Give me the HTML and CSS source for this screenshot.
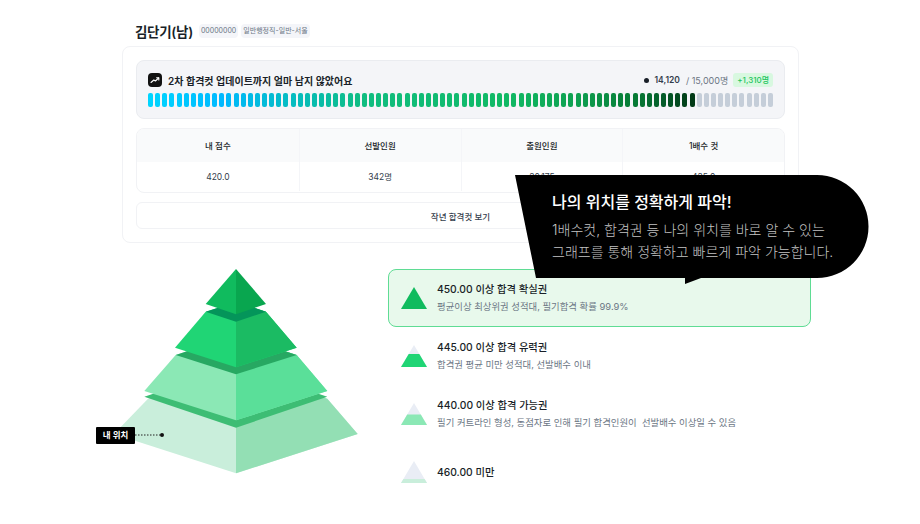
FILE: index.html
```html
<!DOCTYPE html>
<html lang="ko">
<head>
    <meta charset="UTF-8">
    <meta name="viewport" content="width=device-width, initial-scale=1.0">
    <title>합격 예측</title>
    <link rel="stylesheet" href="styles.css">
</head>
<body>
    <div class="page">
        <!-- Applicant header -->
        <div class="profile">
            <h1>김단기(남)</h1>
            <span class="tag">00000000</span>
            <span class="tag">일반행정직-일반-서울</span>
        </div>

        <div class="card">
            <!-- Cut-off progress -->
            <div class="progress-panel">
                <div class="progress-head">
                    <div class="progress-title">
                        <span class="trend-icon">
                            <svg width="10" height="10" viewBox="0 0 10 10" fill="none" stroke="#fff" stroke-width="1.1" stroke-linecap="round" stroke-linejoin="round">
                                <path d="M1 7.5 L3.8 5 L5.4 6 L8.6 3"/>
                                <path d="M6.6 2.8 H8.8 V5"/>
                            </svg>
                        </span>
                        <span>2차 합격컷 업데이트까지 얼마 남지 않았어요</span>
                    </div>
                    <div class="progress-stats">
                        <span class="dot"></span>
                        <span class="count">14,120</span>
                        <span class="total">/ 15,000명</span>
                        <span class="badge">+1,310명</span>
                    </div>
                </div>
                <div class="segments" id="segments"></div>
            </div>

            <!-- Score table -->
            <div class="score-table">
                <div class="cell head">내 점수</div>
                <div class="cell head">선발인원</div>
                <div class="cell head">출원인원</div>
                <div class="cell head">1배수 컷</div>
                <div class="cell">420.0</div>
                <div class="cell">342명</div>
                <div class="cell">30,175</div>
                <div class="cell">435.0</div>
            </div>

            <button class="last-year">작년 합격컷 보기</button>
        </div>

        <!-- Speech bubble -->
        <div class="bubble">
            <svg class="bubble-shape" width="354" height="110" viewBox="0 0 354 110">
                <path d="M0 0 H302 A51.500 51.500 0 0 1 302 103 H186 L170 109 V103 H21 Z" fill="#000"/>
            </svg>
            <h2>나의 위치를 정확하게 파악!</h2>
            <p>1배수컷, 합격권 등 나의 위치를 바로 알 수 있는<br>그래프를 통해 정확하고 빠르게 파악 가능합니다.</p>
        </div>

        <div class="result">
            <!-- Pyramid diagram -->
            <div class="pyramid">
                <svg width="270" height="220" viewBox="96 262 270 220">
                    <polygon points="148,398.700 236,368 327.300,398.700 357.700,434 236,473.300 114,434" fill="#c9eedb"/>
                    <polygon points="236,368 327.300,398.700 357.700,434 236,473.300" fill="#93dfb4"/>
                    <polygon points="144.300,396.700 236,366 327.300,396.700 236,427.700" fill="#3dbd74"/>
                    <polygon points="175.700,355 236,335 296.700,355 327.300,391 236,420.300 144.300,391" fill="#8be8b5"/>
                    <polygon points="236,335 296.700,355 327.300,391 236,420.300" fill="#5adf99"/>
                    <polygon points="175.700,355 236,335 296.700,355 236,374.300" fill="#27a862"/>
                    <polygon points="205.700,311.700 236,302 266,311.700 296.700,347.700 236,367.300 175,347.700" fill="#20d575"/>
                    <polygon points="236,302 266,311.700 296.700,347.700 236,367.300" fill="#1bbb63"/>
                    <polygon points="205.700,311.700 236,302 266,311.700 236,321.700" fill="#04955a"/>
                    <polygon points="236,269 266,304 236,314.300" fill="#09a64f"/>
                    <polygon points="236,269 205.700,304 236,314.300" fill="#10bb5e"/>
                    <line x1="135" y1="435" x2="161" y2="435" stroke="#222" stroke-width="1" stroke-dasharray="1.500 1.500"/>
                    <circle cx="162" cy="435" r="2" fill="#111"/>
                </svg>
                <span class="my-place">내 위치</span>
            </div>

            <!-- Score bands -->
            <div class="bands">
                <div class="band active">
                    <svg width="26" height="22" viewBox="0 0 26 22">
                        <polygon points="13,0 26,22 0,22" fill="#10bb5e"/>
                    </svg>
                    <div>
                        <h3>450.00 이상 합격 확실권</h3>
                        <p>평균이상 최상위권 성적대, 필기합격 확률 99.9%</p>
                    </div>
                </div>
                <div class="band">
                    <svg width="26" height="22" viewBox="0 0 26 22">
                        <polygon points="13,0 26,22 0,22" fill="#e9edf5"/>
                        <polygon points="7.700,9 18.300,9 26,22 0,22" fill="#20d575"/>
                    </svg>
                    <div>
                        <h3>445.00 이상 합격 유력권</h3>
                        <p>합격권 평균 미만 성적대, 선발배수 이내</p>
                    </div>
                </div>
                <div class="band">
                    <svg width="26" height="22" viewBox="0 0 26 22">
                        <polygon points="13,0 26,22 0,22" fill="#e9edf5"/>
                        <polygon points="6.200,11.500 19.800,11.500 26,22 0,22" fill="#8be8b5"/>
                    </svg>
                    <div>
                        <h3>440.00 이상 합격 가능권</h3>
                        <p>필기 커트라인 형성, 동점자로 인해 필기 합격인원이 &nbsp;선발배수 이상일 수 있음</p>
                    </div>
                </div>
                <div class="band">
                    <svg width="26" height="22" viewBox="0 0 26 22">
                        <polygon points="13,0 26,22 0,22" fill="#e9edf5"/>
                        <polygon points="2.400,18 23.600,18 26,22 0,22" fill="#c9eedb"/>
                    </svg>
                    <div>
                        <h3>460.00 미만</h3>
                    </div>
                </div>
            </div>
        </div>
    </div>

    <script src="script.js"></script>
</body>
</html>
```

FILE: styles.css
```css
* {
    margin: 0;
    padding: 0;
    box-sizing: border-box;
}

body {
    font-family: Inter, "Noto Sans CJK KR", sans-serif;
    background-color: #fff;
    color: #191f28;
}

.page {
    position: relative;
    width: 920px;
    height: 524px;
    overflow: hidden;
    padding-top: 22px;
}

/* Header */
.profile {
    display: flex;
    align-items: center;
    height: 18px;
    margin-left: 135px;
    gap: 3px;
}

.profile h1 {
    font-size: 13.500px;
    font-weight: 600;
    margin-right: 3px;
    letter-spacing: -0.3px;
}

.tag {
    font-size: 7px;
    line-height: 14px;
    padding: 0 2px;
    color: #6b7684;
    background-color: #f4f5f9;
    border-radius: 4px;
}

/* Card */
.card {
    width: 677px;
    height: 197px;
    margin: 6px 0 0 122px;
    padding: 13px 13px 0 13px;
    border: 1px solid #f1f2f5;
    border-radius: 8px;
    display: flex;
    flex-direction: column;
}

.progress-panel {
    height: 59px;
    padding: 12px 11px 0;
    background-color: #f4f5f8;
    border: 1px solid #eaecf0;
    border-radius: 8px;
}

.progress-head {
    display: flex;
    justify-content: space-between;
    align-items: center;
    height: 14px;
}

.progress-title {
    display: flex;
    align-items: center;
    gap: 6px;
    font-size: 10px;
    font-weight: 600;
}

.trend-icon {
    display: flex;
    align-items: center;
    justify-content: center;
    width: 14px;
    height: 14px;
    background-color: #111;
    border-radius: 4px;
}

.progress-stats {
    display: flex;
    align-items: center;
    font-size: 9px;
}

.dot {
    width: 5px;
    height: 5px;
    border-radius: 50%;
    background-color: #191f28;
    margin-right: 5px;
}

.count {
    font-size: 8.500px;
    font-weight: 600;
    color: #333d4b;
    margin-right: 6px;
}

.total {
    color: #6b7684;
    margin-right: 5px;
}

.badge {
    font-size: 8px;
    line-height: 14px;
    font-weight: 500;
    padding: 0 4px;
    color: #22c55e;
    background-color: #d8f8e0;
    border-radius: 3px;
}

.segments {
    display: flex;
    gap: 2.130px;
    margin-top: 6px;
}

.segment {
    width: 5px;
    height: 14px;
    border-radius: 2px;
    flex: none;
}

/* Score table */
.score-table {
    display: grid;
    grid-template-columns: repeat(4, 1fr);
    grid-template-rows: 33px 29px;
    margin-top: 9px;
    height: 65px;
    border: 1px solid #f1f2f5;
    border-radius: 8px;
    overflow: hidden;
}

.cell {
    display: flex;
    align-items: center;
    justify-content: center;
    font-size: 8.500px;
    line-height: 12px;
    color: #333d4b;
    border-left: 1px solid #f4f5f8;
}

.cell:nth-child(4n + 1) {
    border-left: none;
}

.cell.head {
    font-weight: 500;
    color: #191f28;
    background-color: #f9fafb;
}

.last-year {
    height: 27px;
    margin-top: 9px;
    font-family: inherit;
    font-size: 8.500px;
    font-weight: 500;
    color: #333d4b;
    background-color: #fff;
    border: 1px solid #f1f2f5;
    border-radius: 6px;
}

/* Speech bubble */
.bubble {
    position: absolute;
    left: 515px;
    top: 175px;
    width: 354px;
    height: 110px;
    padding: 16px 0 0 37px;
    color: #fff;
}

.bubble-shape {
    position: absolute;
    left: 0;
    top: 0;
}

.bubble h2,
.bubble p {
    position: relative;
}

.bubble h2 {
    font-size: 16px;
    line-height: 23px;
    font-weight: 500;
}

.bubble p {
    margin-top: 5px;
    font-size: 14px;
    line-height: 22px;
    font-weight: 300;
    color: #c4c4c4;
}

/* Pyramid and bands */
.result {
    display: flex;
    margin: 19px 0 0 96px;
}

.pyramid {
    position: relative;
    width: 270px;
    height: 220px;
    flex: none;
}

.my-place {
    position: absolute;
    left: 0;
    top: 165px;
    width: 39px;
    height: 17px;
    font-size: 8.500px;
    font-weight: 600;
    line-height: 17px;
    text-align: center;
    color: #fff;
    background-color: #000;
    border-radius: 1px;
}

.bands {
    width: 423px;
    margin: 7px 0 0 22px;
}

.band {
    display: flex;
    align-items: center;
    height: 58px;
    padding-left: 12px;
    gap: 10px;
    border: 1px solid transparent;
}

.band.active {
    background-color: #e8f9ec;
    border-color: #5fdc94;
    border-radius: 8px;
}

.band svg {
    flex: none;
}

.band h3 {
    font-size: 10.300px;
    line-height: 15px;
    font-weight: 500;
}

.band p {
    margin-top: 2px;
    font-size: 9.400px;
    line-height: 15px;
    color: #6b7684;
}
```

FILE: script.js
```js
// Colour stops along the bar: [segment index, r, g, b]
const stops = [
    [0, 0, 213, 255],
    [10, 0, 185, 255],
    [20, 5, 188, 192],
    [30, 16, 189, 128],
    [50, 16, 185, 100],
    [60, 14, 159, 80],
    [68, 6, 122, 53],
    [72, 4, 92, 42],
    [76, 1, 58, 22]
];
const total = 88;
const filled = 77;

function colorAt(i) {
    for (let s = 1; s < stops.length; s++) {
        if (i <= stops[s][0]) {
            const a = stops[s - 1];
            const b = stops[s];
            const t = (i - a[0]) / (b[0] - a[0]);
            const mix = (n) => Math.round(a[n] + (b[n] - a[n]) * t);
            return `rgb(${mix(1)}, ${mix(2)}, ${mix(3)})`;
        }
    }
    return '#c5ced9';
}

const bar = document.getElementById('segments');
for (let i = 0; i < total; i++) {
    const seg = document.createElement('span');
    seg.classList.add('segment');
    seg.style.backgroundColor = i < filled ? colorAt(i) : '#c5ced9';
    bar.appendChild(seg);
}
```
